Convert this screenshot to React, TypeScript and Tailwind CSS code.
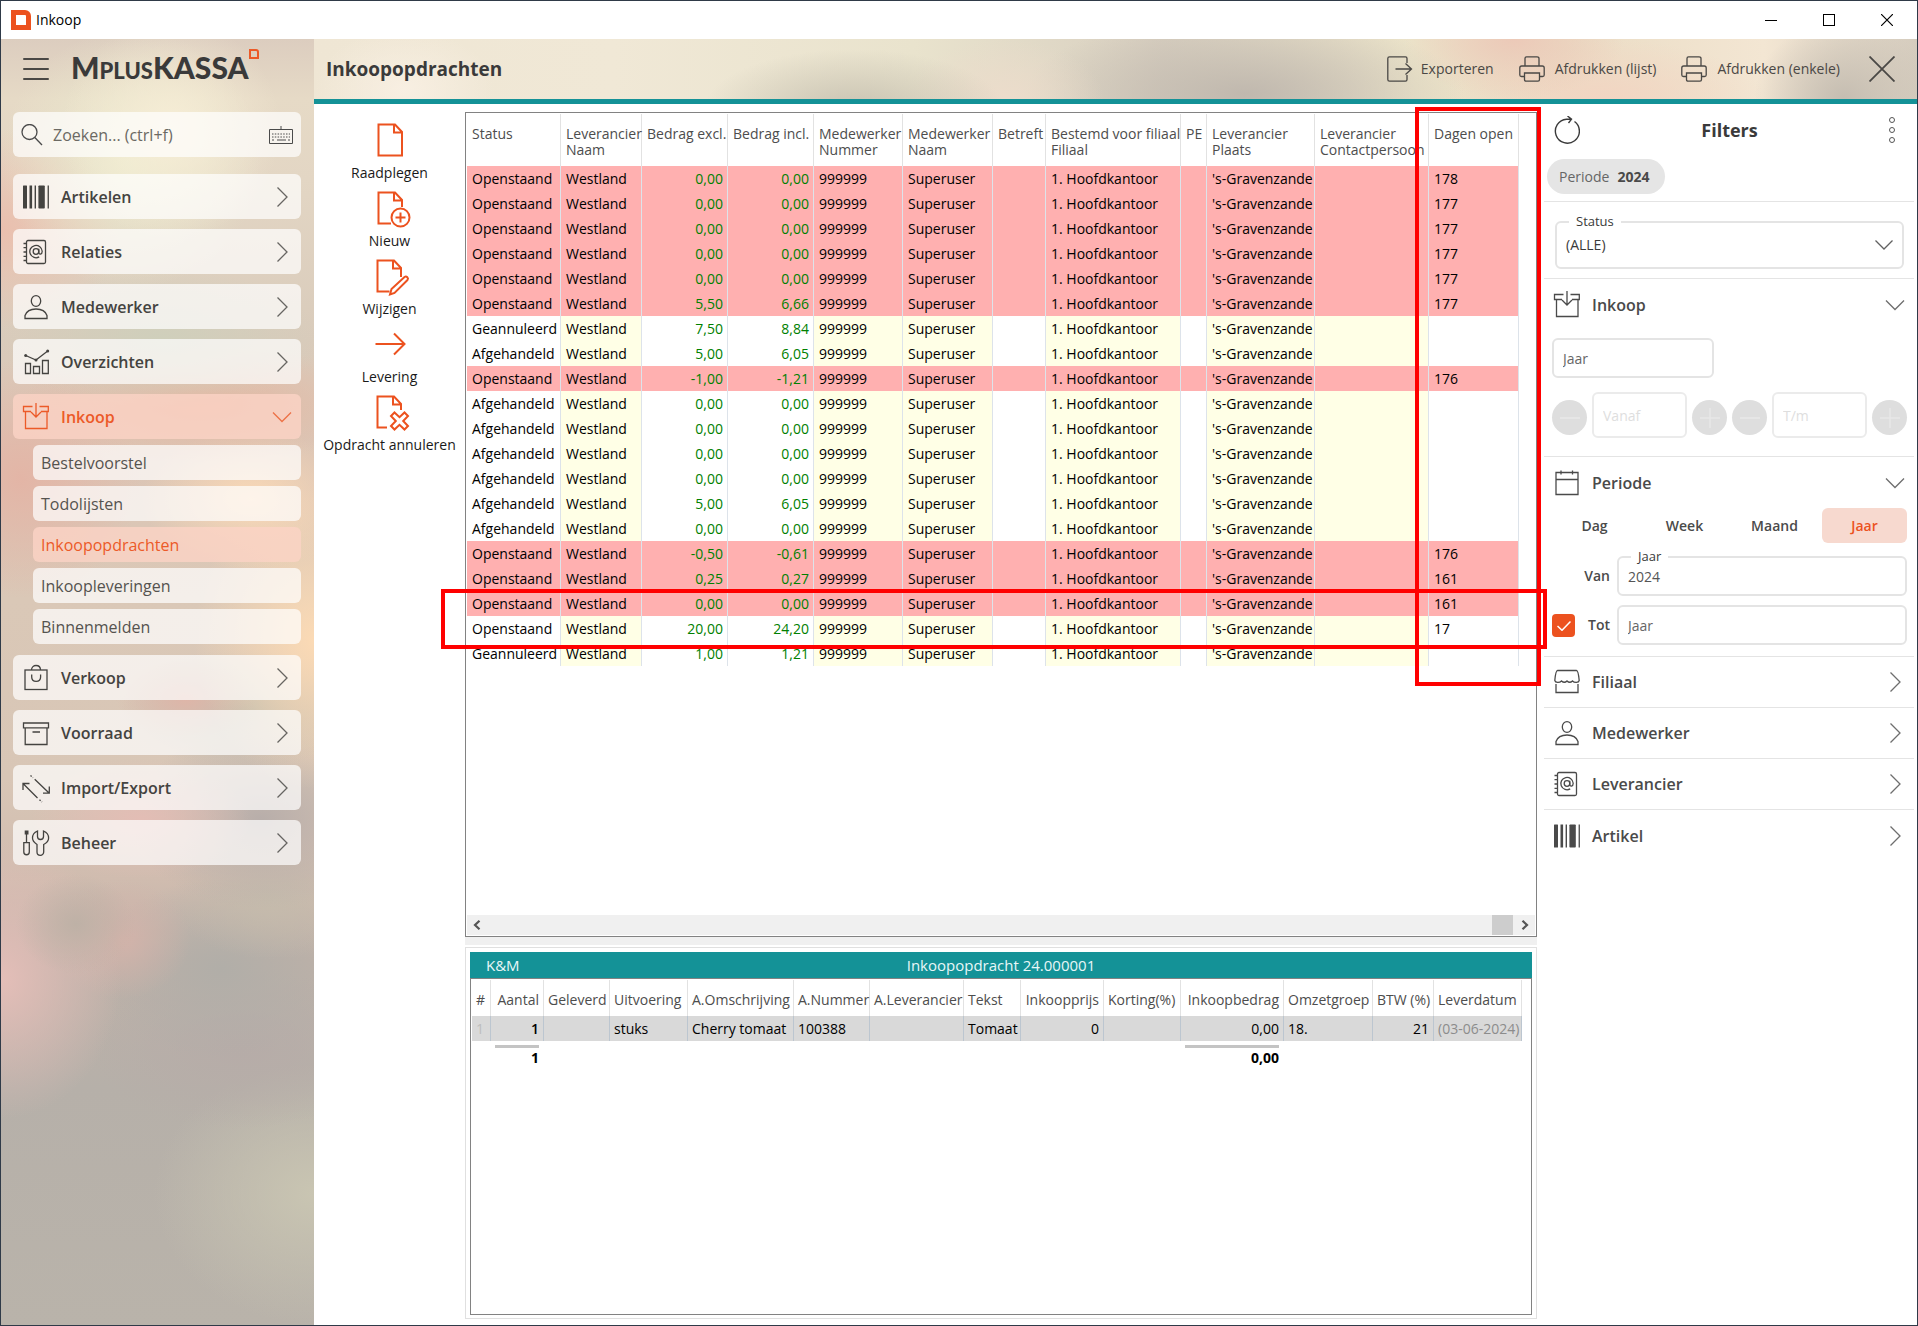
import React from 'react';
import clsx from 'clsx';

interface IconProps {
  className?: string;
}

const Svg: React.FC<IconProps & { children: React.ReactNode }> = ({ className, children }) => (
  <svg
    viewBox="0 0 26 26"
    fill="none"
    stroke="currentColor"
    strokeWidth="1.3"
    aria-hidden="true"
    className={clsx('h-[26px] w-[26px] shrink-0 overflow-visible', className)}
  >
    {children}
  </svg>
);

const BarcodeIcon = () => (
  <Svg>
    <g fill="currentColor" stroke="none">
      <rect x="0" y="1.5" width="4" height="23" rx="0.5" />
      <rect x="6.5" y="1.5" width="2.6" height="23" />
      <rect x="11.6" y="1.5" width="1.4" height="23" />
      <rect x="15.4" y="1.5" width="6.4" height="23" rx="0.8" />
      <rect x="24.6" y="1.5" width="1.3" height="23" />
    </g>
  </Svg>
);

const ContactIcon = () => (
  <Svg>
    <rect x="3.5" y="1.5" width="19" height="23" rx="1.5" />
    <path d="M0.5 4.5H3.5M0.5 8.7H3.5M0.5 13H3.5M0.5 17.3H3.5M0.5 21.5H3.5" />
    <circle cx="13" cy="12.5" r="2.8" />
    <path d="M15.8 9.7V13.5C15.8 16 19.2 15.7 19.2 12.3A6.2 6.2 0 1 0 16.2 17.9" />
  </Svg>
);

const PersonIcon = () => (
  <Svg>
    <ellipse cx="13" cy="7" rx="4.7" ry="5.4" />
    <path d="M2 24.5V21.5C3.5 17.2 8 15 13 15S22.5 17.2 24 21.5V24.5Z" />
  </Svg>
);

const ChartIcon = () => (
  <Svg>
    <path d="M2.5 14.5H7.5V24.5H2.5ZM10.5 17.5H16.5V24.5H10.5ZM19.5 11.5H25.3V24.5H19.5Z" />
    <path d="M2.7 6.5L13 11L24.7 2" />
    <g fill="currentColor" stroke="none">
      <circle cx="2.7" cy="6.5" r="1.5" />
      <circle cx="13" cy="11" r="1.5" />
      <circle cx="24.7" cy="2" r="1.5" />
    </g>
  </Svg>
);

const BoxInIcon = () => (
  <Svg>
    <path d="M9.5 2.5H0.5V7.5H8M16.5 2.5H25.3V7.5H18M2.5 7.5V24.5H24V7.5" />
    <path d="M13 -1V13M8 8L13 13L18 8" />
  </Svg>
);

const BagIcon = () => (
  <Svg>
    <rect x="2" y="5" width="22" height="19.5" />
    <path d="M8.5 5C8.5 -1 17.5 -1 17.5 5M8.7 9.5V12C8.7 17.8 17.6 17.8 17.6 12V9.5" />
  </Svg>
);

const StockIcon = () => (
  <Svg>
    <path d="M0.5 3H25.5V7.8H0.5ZM2.2 7.8V24.5H24V7.8M9.5 12H17" />
  </Svg>
);

const TransferIcon = () => (
  <Svg>
    <path d="M6.5 8.5H0V15M0 8.5L14.5 23M20 18.2H26.3V11.5M26.3 18.2L11.7 4.2" />
    <path d="M16.5 24.7L19 27M7.5 0.5L10 2.7" strokeDasharray="1.5 1.5" />
  </Svg>
);

const ToolsIcon = () => (
  <Svg>
    <rect x="1.7" y="0.5" width="3.8" height="4" fill="currentColor" stroke="none" />
    <path d="M3.5 4V12.7M0.8 12.7H6.3V22A2.7 2.7 0 0 1 0.8 22Z" />
    <path d="M14.5 1C11 2.5 9.5 5 9.5 8C9.5 11.3 11.8 13 14 14.5V22A3.3 3.3 0 0 0 20.7 22V14.5C23.5 13 25.6 11.3 25.6 8C25.6 5 24 2.5 20.5 1V6.5A3 3 0 0 1 14.5 6.5Z" />
  </Svg>
);

const CalendarIcon = () => (
  <Svg>
    <path d="M2 2.5H24V24.5H2ZM2 9.5H24M7 0.5V4.5M18.5 0.5V4.5" />
  </Svg>
);

const StoreIcon = () => (
  <Svg>
    <path d="M3.5 1.5H22.5C24 1.5 24.5 4 25.2 11.5C24.5 14.5 20 13.5 18.5 12C16.5 13.8 14.5 13.5 13 12C11.5 13.5 9.5 13.8 7.5 12C6 13.5 1.5 14.5 0.8 11.5C1.5 4 2 1.5 3.5 1.5Z" />
    <path d="M2 15V23.5H24V15" />
  </Svg>
);

const ExportIcon = () => (
  <Svg>
    <path d="M20 7V2.5C20 1.3 19.5 0.8 18.5 0.8H2.5C1.3 0.8 0.8 1.3 0.8 2.5V23.5C0.8 24.7 1.3 25.2 2.5 25.2H18.5C19.5 25.2 20 24.7 20 23.5V19M8.5 13H24.5M18.5 7.5L24.5 13L18.5 18.5" />
  </Svg>
);

const PrinterIcon = () => (
  <Svg>
    <path d="M6 10V2.5C6 1.3 6.5 0.8 7.5 0.8H18C19 0.8 20 1.3 20 2.5V10M5.5 20.5H2.5C1.3 20.5 0.8 20 0.8 19V12C0.8 10.7 1.5 10 2.7 10H23.3C24.5 10 25.2 10.7 25.2 12V19C25.2 20 24.7 20.5 23.5 20.5H20.5" />
    <path d="M5.5 17H20.5V23.5C20.5 24.7 20 25.2 19 25.2H7C6 25.2 5.5 24.7 5.5 23.5Z" />
  </Svg>
);

const Chevron: React.FC<{ open?: boolean }> = ({ open }) => (
  <svg
    viewBox="0 0 20 20"
    fill="none"
    stroke="currentColor"
    strokeWidth="1.3"
    aria-hidden="true"
    className="h-5 w-5 shrink-0 opacity-80"
  >
    {open ? <path d="M1 5.5L10 14.5L19 5.5" /> : <path d="M5.5 0.5L15 10L5.5 19.5" />}
  </svg>
);

interface MenuItem {
  label: string;
  icon: React.FC;
  children?: string[];
}

const menu: MenuItem[] = [
  { label: 'Artikelen', icon: BarcodeIcon },
  { label: 'Relaties', icon: ContactIcon },
  { label: 'Medewerker', icon: PersonIcon },
  { label: 'Overzichten', icon: ChartIcon },
  {
    label: 'Inkoop',
    icon: BoxInIcon,
    children: ['Bestelvoorstel', 'Todolijsten', 'Inkoopopdrachten', 'Inkoopleveringen', 'Binnenmelden'],
  },
  { label: 'Verkoop', icon: BagIcon },
  { label: 'Voorraad', icon: StockIcon },
  { label: 'Import/Export', icon: TransferIcon },
  { label: 'Beheer', icon: ToolsIcon },
];

const Sidebar = () => (
  <aside className="flex w-[313px] shrink-0 flex-col bg-[radial-gradient(circle_at_170px_90px,#f6edd6,transparent_110px),radial-gradient(circle_at_130px_120px,#ecebcf,transparent_130px),radial-gradient(ellipse_120px_100px_at_0px_190px,#eabfae,transparent),radial-gradient(ellipse_160px_70px_at_160px_300px,#cfcfbb,transparent),radial-gradient(ellipse_180px_60px_at_200px_365px,#e4b7a2,transparent),radial-gradient(ellipse_120px_120px_at_20px_440px,#e3b5a6,transparent),radial-gradient(ellipse_110px_70px_at_250px_460px,#fad9b7,transparent),radial-gradient(ellipse_120px_150px_at_313px_600px,#fbdab5,transparent),radial-gradient(ellipse_70px_40px_at_185px_660px,#deb5a8,transparent),radial-gradient(ellipse_120px_60px_at_240px_670px,#bfbcae,transparent),radial-gradient(ellipse_110px_60px_at_140px_780px,#e3bdb5,transparent),radial-gradient(ellipse_130px_90px_at_260px_780px,#b8aeaa,transparent),radial-gradient(ellipse_60px_50px_at_75px_885px,#beb1a6,transparent),radial-gradient(ellipse_120px_140px_at_0px_940px,#e4beb8,transparent),radial-gradient(ellipse_70px_60px_at_120px_900px,#d3b3aa,transparent),radial-gradient(ellipse_100px_60px_at_270px_860px,#c5bbac,transparent),radial-gradient(ellipse_130px_90px_at_220px_930px,#b1aea8,transparent),radial-gradient(ellipse_150px_80px_at_240px_1010px,#b6aca8,transparent),radial-gradient(ellipse_160px_130px_at_313px_1155px,#c9c5b2,transparent),linear-gradient(#dccdbf,#e6dac6_60px,#e3d6c4_140px,#d9cbbb_300px,#dcc5b5_420px,#dac8b7_560px,#d8c6b6_740px,#d0bcaf_840px,#beb1a8_920px,#b6b0a9_1050px,#b9b3aa)]">
    <div className="flex h-[60px] items-center pl-[22px]">
      <button type="button" aria-label="Menu" className="flex w-[26px] flex-col gap-2">
        <span className="h-[2px] w-full rounded bg-[#4a4845]" />
        <span className="h-[2px] w-full rounded bg-[#4a4845]" />
        <span className="h-[2px] w-full rounded bg-[#4a4845]" />
      </button>
      <div className="ml-[22px] flex items-start font-['Lato',sans-serif] text-[30px] leading-8 font-black text-[#3a3a3a]">
        <span>
          M<span className="text-[22px]">PLUS</span>KASSA
        </span>
        <span className="-mt-[2px] h-[10px] w-[10px] rounded-tr-[3px] border-2 border-[#ec5a28]" />
      </div>
    </div>

    <label className="mt-[13px] mr-[13px] ml-3 flex h-[45px] items-center rounded-md bg-white/70 px-2 text-[#4a4a4a]">
      <svg viewBox="0 0 22 22" fill="none" stroke="currentColor" strokeWidth="1.3" className="h-[22px] w-[22px] shrink-0">
        <circle cx="8.5" cy="8" r="7.5" />
        <path d="M13.8 13.5L21 21" />
      </svg>
      <input
        type="text"
        placeholder="Zoeken... (ctrl+f)"
        className="ml-[10px] min-w-0 flex-1 bg-transparent text-base outline-none placeholder:text-[#6b6963]"
      />
      <svg viewBox="0 0 24 18" fill="none" stroke="currentColor" className="h-[18px] w-6 shrink-0">
        <path d="M0.5 3.5H23.5V17.5H0.5ZM12 0V3.5" />
        <path d="M3 8H21M3 11H21" strokeDasharray="1.5 1.3" />
        <path d="M3 14H5M8 14H17M19 14H21" />
      </svg>
    </label>

    <nav className="mt-[17px] mr-[13px] ml-3 flex flex-col gap-[10px]">
      {menu.map(({ label, icon: Icon, children }) => (
        <div key={label}>
          <button
            type="button"
            className={clsx(
              'flex h-[45px] w-full items-center rounded-md pr-[9px] pl-[10px] text-left text-base font-semibold',
              children ? 'bg-[#fbd3c6]/80 text-[#ec5a28]' : 'bg-white/70 text-[#444340]'
            )}
          >
            <Icon />
            <span className="ml-3 flex-1">{label}</span>
            <Chevron open={!!children} />
          </button>
          {children && (
            <div className="mt-[6px] mb-px ml-5 flex flex-col gap-[6px]">
              {children.map((child) => (
                <a
                  key={child}
                  href="#"
                  className={clsx(
                    'flex h-[35px] items-center rounded-md px-2 text-base',
                    child === 'Inkoopopdrachten' ? 'bg-[#fbd3c6]/80 text-[#ec5a28]' : 'bg-white/70 text-[#55534f]'
                  )}
                >
                  {child}
                </a>
              ))}
            </div>
          )}
        </div>
      ))}
    </nav>
  </aside>
);

const PageHeader = () => (
  <header className="flex h-[65px] shrink-0 items-center border-b-[5px] border-[#149297] bg-[radial-gradient(ellipse_90px_60px_at_90px_50px,#f8efe2,transparent),radial-gradient(ellipse_150px_60px_at_540px_70px,#c9c3b2,transparent),radial-gradient(ellipse_100px_60px_at_690px_60px,#ecdccb,transparent),radial-gradient(ellipse_220px_80px_at_930px_55px,#c0b8ae,transparent),radial-gradient(ellipse_110px_60px_at_1200px_0px,#ecc9b8,transparent),radial-gradient(ellipse_160px_60px_at_1290px_60px,#f2d5c2,transparent),radial-gradient(ellipse_90px_80px_at_1530px_60px,#c5bdb1,transparent),linear-gradient(90deg,#efe6d4,#f0e8d6_300px,#e9e3cd_600px,#d8cfc0_850px,#ebe3c9_1100px,#eadcc4_1250px,#f3e6d3_1450px,#d5ccbe)] pr-[22px] pl-3">
    <h1 className="flex-1 text-[19px] font-bold text-[#3a3a3a]">Inkoopopdrachten</h1>
    <div className="flex items-center gap-[25px] text-sm text-[#4a4845]">
      <button type="button" className="flex items-center gap-2">
        <ExportIcon />
        Exporteren
      </button>
      <button type="button" className="flex items-center gap-[10px]">
        <PrinterIcon />
        Afdrukken (lijst)
      </button>
      <button type="button" className="flex items-center gap-[10px]">
        <PrinterIcon />
        Afdrukken (enkele)
      </button>
      <button type="button" aria-label="Sluiten" className="ml-1">
        <svg viewBox="0 0 26 26" fill="none" stroke="currentColor" strokeWidth="1.8" className="h-[26px] w-[26px]">
          <path d="M0.5 0.5L25.5 25.5M25.5 0.5L0.5 25.5" />
        </svg>
      </button>
    </div>
  </header>
);

const DocSvg: React.FC<{ children: React.ReactNode }> = ({ children }) => (
  <svg viewBox="0 0 26 36" fill="none" stroke="#ec521f" strokeWidth="2" aria-hidden="true" className="h-9 w-[26px] overflow-visible">
    {children}
  </svg>
);

const actions = [
  {
    label: 'Raadplegen',
    icon: <path d="M1.5 1.5H18L25 9V32.5H1.5ZM17 1.5V9.5H25" />,
  },
  {
    label: 'Nieuw',
    icon: (
      <>
        <path d="M14 32.5H1.5V1.5H18L25 9V16M17 1.5V9.5H25" />
        <circle cx="23.5" cy="26.5" r="9" />
        <path d="M23.5 21.5V31.5M18.5 26.5H28.5" />
      </>
    ),
  },
  {
    label: 'Wijzigen',
    icon: (
      <>
        <path d="M13.5 32.5H1.5V1.5H18L25 9V18M17 1.5V9.5H25" />
        <path d="M14 35.5L15.5 30L28.5 18C30.5 16.5 33 19 31.5 21L18.5 34Z" />
      </>
    ),
  },
  {
    label: 'Levering',
    icon: <path d="M-1.5 17H27.5M17 6.5L27.5 17L17 27.5" />,
  },
  {
    label: 'Opdracht annuleren',
    icon: (
      <>
        <path d="M11 32.5H1.5V1.5H18L25 9V15M17 1.5V9.5H25" />
        <path d="M18.5 17.5L23.5 22.2L28.5 17.5L32 21L27.2 26L32 31L28.5 34.5L23.5 29.8L18.5 34.5L15 31L19.8 26L15 21Z" />
      </>
    ),
  },
];

const Toolbar = () => (
  <div className="flex w-[151px] shrink-0 flex-col items-center gap-2 pt-[19px]">
    {actions.map((action) => (
      <button
        key={action.label}
        type="button"
        className="flex flex-col items-center gap-1 text-sm leading-5 whitespace-nowrap text-[#1a1a1a]"
      >
        <DocSvg>{action.icon}</DocSvg>
        {action.label}
      </button>
    ))}
  </div>
);

const orderColumns = [
  { title: 'Status', width: 'w-[94px]' },
  { title: 'Leverancier\nNaam', width: 'w-[81px]', tinted: true },
  { title: 'Bedrag excl.', width: 'w-[86px]', amount: true },
  { title: 'Bedrag incl.', width: 'w-[86px]', amount: true },
  { title: 'Medewerker\nNummer', width: 'w-[89px]', tinted: true },
  { title: 'Medewerker\nNaam', width: 'w-[90px]', tinted: true },
  { title: 'Betreft', width: 'w-[53px]' },
  { title: 'Bestemd voor filiaal\nFiliaal', width: 'w-[135px]', tinted: true },
  { title: 'PE', width: 'w-[26px]' },
  { title: 'Leverancier\nPlaats', width: 'w-[108px]', tinted: true },
  { title: 'Leverancier\nContactpersoon', width: 'w-[114px]', tinted: true },
  { title: 'Dagen open', width: 'w-[90px]' },
];

// status, bedrag excl., bedrag incl., dagen open
const orders: [string, string, string, string][] = [
  ['Openstaand', '0,00', '0,00', '178'],
  ['Openstaand', '0,00', '0,00', '177'],
  ['Openstaand', '0,00', '0,00', '177'],
  ['Openstaand', '0,00', '0,00', '177'],
  ['Openstaand', '0,00', '0,00', '177'],
  ['Openstaand', '5,50', '6,66', '177'],
  ['Geannuleerd', '7,50', '8,84', ''],
  ['Afgehandeld', '5,00', '6,05', ''],
  ['Openstaand', '-1,00', '-1,21', '176'],
  ['Afgehandeld', '0,00', '0,00', ''],
  ['Afgehandeld', '0,00', '0,00', ''],
  ['Afgehandeld', '0,00', '0,00', ''],
  ['Afgehandeld', '0,00', '0,00', ''],
  ['Afgehandeld', '5,00', '6,05', ''],
  ['Afgehandeld', '0,00', '0,00', ''],
  ['Openstaand', '-0,50', '-0,61', '176'],
  ['Openstaand', '0,25', '0,27', '161'],
  ['Openstaand', '0,00', '0,00', '161'],
  ['Openstaand', '20,00', '24,20', '17'],
  ['Geannuleerd', '1,00', '1,21', ''],
];

const OrdersGrid = () => (
  <div className="flex min-h-0 flex-1 flex-col border border-[#828282] bg-white p-px">
    <div className="flex-1">
      <table className="w-[1052px] table-fixed border-separate border-spacing-0 text-sm leading-4 whitespace-nowrap">
        <colgroup>
          {orderColumns.map((column) => (
            <col key={column.title} className={column.width} />
          ))}
        </colgroup>
        <thead>
          <tr>
            {orderColumns.map((column) => (
              <th
                key={column.title}
                scope="col"
                className={clsx(
                  'h-[52px] border-r border-[#e2e2e2] pt-3 pl-[5px] align-top font-normal whitespace-pre text-[#4d4d4d]',
                  column.amount ? 'pr-1 text-right' : 'text-left'
                )}
              >
                {column.title}
              </th>
            ))}
          </tr>
        </thead>
        <tbody>
          {orders.map(([status, excl, incl, days], index) => {
            const overdue = Number(days) > 30;
            const cells = [
              status,
              'Westland',
              excl,
              incl,
              '999999',
              'Superuser',
              '',
              '1. Hoofdkantoor',
              '',
              "'s-Gravenzande",
              '',
              days,
            ];
            return (
              <tr key={index} className={overdue ? 'bg-[#ffb0b0]' : 'bg-white'}>
                {cells.map((cell, i) => (
                  <td
                    key={i}
                    className={clsx(
                      'h-[25px] border-r border-[#dde3ea] pl-[5px]',
                      orderColumns[i].amount ? 'pr-1 text-right text-[#008000]' : 'text-black',
                      orderColumns[i].tinted && !overdue && 'bg-[#ffffe6]'
                    )}
                  >
                    {cell}
                  </td>
                ))}
              </tr>
            );
          })}
        </tbody>
      </table>
    </div>
    <div className="flex h-5 items-center bg-[#f0f0f0] px-[6px] text-[#555]">
      <svg viewBox="0 0 8 10" fill="none" stroke="currentColor" strokeWidth="2.2" className="h-[10px] w-2">
        <path d="M6.5 0.8L2 5L6.5 9.2" />
      </svg>
      <span className="ml-auto h-5 w-[21px] bg-[#cdcdcd]" />
      <svg viewBox="0 0 8 10" fill="none" stroke="currentColor" strokeWidth="2.2" className="ml-2 h-[10px] w-2">
        <path d="M1.5 0.8L6 5L1.5 9.2" />
      </svg>
    </div>
  </div>
);

const lineColumns = [
  { title: '#', width: 'w-[19px]', value: '1', style: 'text-[#bdbdbd]' },
  { title: 'Aantal', width: 'w-[53px]', value: '1', style: 'font-semibold', right: true, total: '1' },
  { title: 'Geleverd', width: 'w-[66px]', value: '' },
  { title: 'Uitvoering', width: 'w-[78px]', value: 'stuks' },
  { title: 'A.Omschrijving', width: 'w-[106px]', value: 'Cherry tomaat' },
  { title: 'A.Nummer', width: 'w-[76px]', value: '100388' },
  { title: 'A.Leverancier', width: 'w-[94px]', value: '' },
  { title: 'Tekst', width: 'w-[57px]', value: 'Tomaat' },
  { title: 'Inkoopprijs', width: 'w-[83px]', value: '0', right: true },
  { title: 'Korting(%)', width: 'w-[77px]', value: '' },
  { title: 'Inkoopbedrag', width: 'w-[103px]', value: '0,00', right: true, total: '0,00' },
  { title: 'Omzetgroep', width: 'w-[89px]', value: '18.' },
  { title: 'BTW (%)', width: 'w-[61px]', value: '21', right: true },
  { title: 'Leverdatum', width: 'w-[88px]', value: '(03-06-2024)', style: 'text-[#8c8c8c]' },
];

const OrderLines = () => (
  <section className="flex h-[372px] shrink-0 flex-col border border-[#e0e0e0] px-1 pt-1 pb-[3px]">
    <div className="flex h-[26px] items-center bg-[#149297] px-4 text-[15px] text-[#e8f7f7]">
      <span className="flex-1">K&amp;M</span>
      <span>Inkoopopdracht 24.000001</span>
      <span className="flex-1" />
    </div>
    <div className="flex-1 border border-[#828282] p-px">
      <table className="w-[1050px] table-fixed border-separate border-spacing-0 text-sm leading-4 whitespace-nowrap">
        <colgroup>
          {lineColumns.map((column) => (
            <col key={column.title} className={column.width} />
          ))}
        </colgroup>
        <thead>
          <tr>
            {lineColumns.map((column) => (
              <th
                key={column.title}
                scope="col"
                className={clsx(
                  'h-9 border-r border-[#e2e2e2] pt-1 pl-1 font-normal text-[#4d4d4d]',
                  column.right ? 'pr-1 text-right' : 'text-left'
                )}
              >
                {column.title}
              </th>
            ))}
          </tr>
        </thead>
        <tbody>
          <tr className="bg-[#d9d9d9]">
            {lineColumns.map((column) => (
              <td
                key={column.title}
                className={clsx('h-[25px] border-r border-[#bcc6d0] pl-1', column.right && 'pr-1 text-right', column.style)}
              >
                {column.value}
              </td>
            ))}
          </tr>
        </tbody>
        <tfoot>
          <tr>
            {lineColumns.map((column) => (
              <td key={column.title} className="pt-1 pr-[5px] pl-1 text-right font-bold">
                {column.total && <div className="border-t-[3px] border-[#c4c4c4] pt-[2px]">{column.total}</div>}
              </td>
            ))}
          </tr>
        </tfoot>
      </table>
    </div>
  </section>
);

const FilterHeading: React.FC<{ label: string; icon: React.FC; open?: boolean }> = ({ label, icon: Icon, open }) => (
  <button type="button" className="flex h-[51px] w-full items-center pr-[9px] pl-[10px] text-left text-base font-semibold text-[#4a4a4a]">
    <Icon />
    <span className="ml-3 flex-1">{label}</span>
    <Chevron open={open} />
  </button>
);

const Stepper: React.FC<{ placeholder: string }> = ({ placeholder }) => (
  <div className="flex flex-1 items-end gap-[5px]">
    <button
      type="button"
      disabled
      aria-label="Minder"
      className="mb-[3px] flex h-[35px] w-[35px] shrink-0 items-center justify-center rounded-full bg-[#dedede]"
    >
      <svg viewBox="0 0 20 20" stroke="#e8e8e8" strokeWidth="1.5" className="h-5 w-5">
        <path d="M0 10H20" />
      </svg>
    </button>
    <input
      type="text"
      disabled
      placeholder={placeholder}
      aria-label={placeholder}
      className="h-[46px] w-0 min-w-0 flex-1 rounded-md border-2 border-[#ebebeb] px-[9px] text-sm placeholder:text-[#dedede]"
    />
    <button
      type="button"
      disabled
      aria-label="Meer"
      className="mb-[3px] flex h-[35px] w-[35px] shrink-0 items-center justify-center rounded-full bg-[#dedede]"
    >
      <svg viewBox="0 0 20 20" stroke="#e8e8e8" strokeWidth="1.5" className="h-5 w-5">
        <path d="M0 10H20M10 0V20" />
      </svg>
    </button>
  </div>
);

const Filters = () => (
  <aside className="flex w-[380px] shrink-0 flex-col pr-[3px] pl-[7px] text-sm text-[#3a3a3a]">
    <div className="flex h-[51px] items-center pr-[19px] pl-[10px]">
      <button type="button" aria-label="Vernieuwen">
        <svg viewBox="0 0 26 28" fill="none" stroke="currentColor" strokeWidth="1.4" className="h-7 w-[26px]">
          <path d="M20.5 5.5A12 12 0 1 1 12.500 3.2H17M13.5 0L17.5 3.2L14.5 7" />
        </svg>
      </button>
      <h2 className="mr-[10px] flex-1 text-center text-lg font-bold">Filters</h2>
      <button type="button" aria-label="Meer opties" className="flex flex-col gap-1">
        <span className="h-[6px] w-[6px] rounded-full border border-[#555]" />
        <span className="h-[6px] w-[6px] rounded-full border border-[#555]" />
        <span className="h-[6px] w-[6px] rounded-full border border-[#555]" />
      </button>
    </div>
    <div className="flex h-[47px] items-start border-b border-[#e4e4e4] pt-1 pl-[3px]">
      <span className="flex h-[35px] items-center gap-2 rounded-full bg-[#e5e5e5] pr-4 pl-3 text-[#666]">
        Periode <b className="font-bold text-[#4a4a4a]">2024</b>
      </span>
    </div>

    <div className="border-b border-[#e4e4e4] pt-[19px] pr-[10px] pb-[9px] pl-[11px]">
      <div className="relative">
        <label htmlFor="status" className="absolute -top-2 left-[14px] bg-white px-[7px] text-[13px] leading-4">
          Status
        </label>
        <select id="status" className="block h-[48px] w-full appearance-none rounded-md border-2 border-[#e4e4e4] bg-white px-[9px] text-sm">
          <option>(ALLE)</option>
        </select>
        <svg viewBox="0 0 18 10" fill="none" stroke="currentColor" strokeWidth="1.3" className="pointer-events-none absolute top-[19px] right-[11px] h-[10px] w-[18px] opacity-80">
          <path d="M0.5 0.5L9 9L17.5 0.5" />
        </svg>
      </div>
    </div>

    <div className="border-b border-[#e4e4e4] pb-[18px]">
      <FilterHeading label="Inkoop" icon={BoxInIcon} open />
      <div className="mt-2 pr-[7px] pl-2">
        <input
          type="text"
          placeholder="Jaar"
          aria-label="Jaar"
          className="block h-10 w-[162px] rounded-md border-2 border-[#e4e4e4] px-[9px] placeholder:text-[#666]"
        />
        <div className="mt-[14px] flex gap-[5px]">
          <Stepper placeholder="Vanaf" />
          <Stepper placeholder="T/m" />
        </div>
      </div>
    </div>

    <div className="border-b border-[#e4e4e4] pb-[11px]">
      <FilterHeading label="Periode" icon={CalendarIcon} open />
      <div className="grid grid-cols-4 gap-[5px] pr-[7px] pl-2">
        {['Dag', 'Week', 'Maand', 'Jaar'].map((period) => (
          <button
            key={period}
            type="button"
            className={clsx('h-[35px] rounded-md font-semibold', period === 'Jaar' ? 'bg-[#f7d9cf] text-[#ec521f]' : 'text-[#4a4a4a]')}
          >
            {period}
          </button>
        ))}
      </div>
      <div className="mt-[13px] flex items-center pr-[7px] pl-2">
        <label htmlFor="van" className="w-[65px] pr-[7px] text-right font-semibold text-[#4a4a4a]">
          Van
        </label>
        <div className="relative flex-1">
          <span className="absolute -top-2 left-[14px] bg-white px-[7px] text-[13px] leading-4">Jaar</span>
          <input id="van" type="text" defaultValue="2024" className="block h-10 w-full rounded-md border-2 border-[#e4e4e4] px-[9px] text-[#555]" />
        </div>
      </div>
      <div className="mt-[9px] flex items-center pr-[7px] pl-2">
        <span className="relative h-[23px] w-[23px]">
          <input id="tot-actief" type="checkbox" defaultChecked aria-label="Tot" className="block h-[23px] w-[23px] appearance-none rounded bg-[#ec521f]" />
          <svg viewBox="0 0 14 10" fill="none" stroke="white" strokeWidth="1.5" className="pointer-events-none absolute top-[7px] left-[5px] h-[10px] w-[14px]">
            <path d="M0.5 5L5 9.3L13.5 0.5" />
          </svg>
        </span>
        <label htmlFor="tot" className="w-[42px] pr-[7px] text-right font-semibold text-[#4a4a4a]">
          Tot
        </label>
        <input id="tot" type="text" placeholder="Jaar" className="h-10 min-w-0 flex-1 rounded-md border-2 border-[#e4e4e4] px-[9px] placeholder:text-[#666]" />
      </div>
    </div>

    <div className="divide-y divide-[#e4e4e4]">
      <FilterHeading label="Filiaal" icon={StoreIcon} />
      <FilterHeading label="Medewerker" icon={PersonIcon} />
      <FilterHeading label="Leverancier" icon={ContactIcon} />
      <FilterHeading label="Artikel" icon={BarcodeIcon} />
    </div>
  </aside>
);

const TitleBar = () => (
  <div className="flex h-[38px] shrink-0 items-center bg-white pr-6 pl-[10px] text-black">
    <span className="h-5 w-5 rounded-tr-[6px] border-[5px] border-[#ec521f]" />
    <span className="ml-[5px] flex-1 text-sm">Inkoop</span>
    <div className="flex items-center gap-[46px]">
      <button type="button" aria-label="Minimaliseren" className="flex h-3 w-3 items-center">
        <span className="h-px w-3 bg-black" />
      </button>
      <button type="button" aria-label="Maximaliseren" className="h-3 w-3 border border-black" />
      <button type="button" aria-label="Venster sluiten">
        <svg viewBox="0 0 12 12" stroke="black" strokeWidth="1.2" className="h-3 w-3">
          <path d="M0 0L12 12M12 0L0 12" />
        </svg>
      </button>
    </div>
  </div>
);

const App = () => (
  <div className="flex min-h-screen flex-col border border-[#2f3a48] bg-white font-['Open_Sans','Segoe_UI',sans-serif]">
    <TitleBar />
    <div className="flex flex-1">
      <Sidebar />
      <div className="flex min-w-0 flex-1 flex-col">
        <PageHeader />
        <div className="flex flex-1">
          <Toolbar />
          <main className="relative flex min-w-0 flex-1 flex-col pt-2 pb-[6px]">
            <OrdersGrid />
            <div className="mb-[2px] h-2 shrink-0 bg-[#f0f0f0]" />
            <OrderLines />

            {/* Highlight frames around the overdue row and the "Dagen open" column */}
            <div className="pointer-events-none absolute top-[485px] -right-[10px] -left-[24px] h-[60px] border-4 border-[#ff0000]" />
            <div className="pointer-events-none absolute top-[3px] left-[950px] h-[579px] w-[126px] border-4 border-[#ff0000]" />
          </main>
          <Filters />
        </div>
      </div>
    </div>
  </div>
);

export default App;
